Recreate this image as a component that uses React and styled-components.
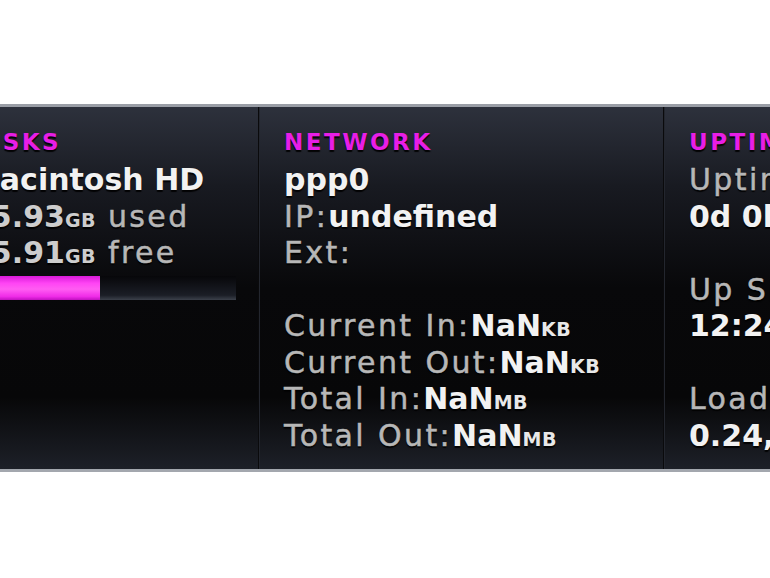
import React from 'react'
import styled, { createGlobalStyle } from 'styled-components'

const GlobalStyle = createGlobalStyle`
  html, body {
    margin: 0;
    padding: 0;
    background: #fff;
    overflow: hidden;
  }
  body {
    font-family: "DejaVu Sans", "Liberation Sans", sans-serif;
  }
`

const Page = styled.div`
  width: 770px;
  height: 578px;
  padding-top: 104px;
  box-sizing: border-box;
  overflow: hidden;
`

const Panel = styled.div`
  height: 368px;
  box-sizing: border-box;
  border-top: 3px solid #9a9ea6;
  border-bottom: 3px solid #a3a7ae;
  background: linear-gradient(
    #2d313c 0%,
    #181a21 22%,
    #08080a 50%,
    #070708 80%,
    #1d2028 100%
  );
  overflow: hidden;
`

const Row = styled.div`
  display: flex;
  height: 100%;
  margin-left: -55px;
`

const Column = styled.div`
  flex: none;
  width: ${p => p.$width}px;
  box-sizing: border-box;
  padding: 21px 0 0 25px;
  white-space: nowrap;

  & + & {
    border-left: 1px solid #0a0a0c;
    box-shadow: inset 1px 0 0 #23262e;
  }
`

const Heading = styled.div`
  font-weight: bold;
  font-size: 23px;
  letter-spacing: 2.5px;
  line-height: 28px;
  color: #e81ee6;
  text-shadow: 0 2px 1px rgba(0, 0, 0, 0.9);
  margin-bottom: 6px;
`

const Line = styled.div`
  font-size: 30px;
  line-height: 36.5px;
  height: 36.5px;
  color: #b7b7b7;
  letter-spacing: 2.4px;
  -webkit-text-stroke: 0.5px #b7b7b7;
  text-shadow: 0 2px 1px rgba(0, 0, 0, 0.9);
`

const Value = styled.span`
  font-weight: bold;
  letter-spacing: 0;
  -webkit-text-stroke: 0;
  color: ${p => (p.$dim ? '#cdcdcd' : '#f2f2f2')};
`

const Unit = styled.span`
  font-weight: bold;
  font-size: 19px;
  letter-spacing: 0.5px;
  -webkit-text-stroke: 0;
  color: ${p => (p.$dim ? '#cdcdcd' : '#e8e8e8')};
`

const Track = styled.div`
  margin-top: 4px;
  width: 266px;
  height: 24px;
  background: linear-gradient(#07070a, #1b1e26 80%, #3c414b);
`

const Fill = styled.div`
  height: 100%;
  background: linear-gradient(#d81ad8, #ff44f4 30%, #ff5cf2 55%, #f02ce8 85%, #c010c0);
`

const disk = { used: 49, name: 'Macintosh HD' }

export default function App() {
  return (
    <Page>
      <GlobalStyle />
      <Panel>
        <Row>
          <Column $width={313}>
            <Heading>DISKS</Heading>
            <Line><Value>{disk.name}</Value></Line>
            <Line><Value $dim>65.93</Value><Unit $dim>GB</Unit> used</Line>
            <Line><Value $dim>85.91</Value><Unit $dim>GB</Unit> free</Line>
            <Track>
              <Fill style={{ width: `${disk.used}%` }} />
            </Track>
          </Column>

          <Column $width={405}>
            <Heading>NETWORK</Heading>
            <Line><Value>ppp0</Value></Line>
            <Line>IP:<Value>undefined</Value></Line>
            <Line>Ext:</Line>
            <Line />
            <Line>Current In:<Value>NaN</Value><Unit>KB</Unit></Line>
            <Line>Current Out:<Value>NaN</Value><Unit>KB</Unit></Line>
            <Line>Total In:<Value>NaN</Value><Unit>MB</Unit></Line>
            <Line>Total Out:<Value>NaN</Value><Unit>MB</Unit></Line>
          </Column>

          <Column $width={300}>
            <Heading>UPTIME</Heading>
            <Line>Uptime:</Line>
            <Line><Value>0d 0h 12m</Value></Line>
            <Line />
            <Line>Up Since:</Line>
            <Line><Value>12:24</Value></Line>
            <Line />
            <Line>Load Avg:</Line>
            <Line><Value>0.24, 0.31, 0.28</Value></Line>
          </Column>
        </Row>
      </Panel>
    </Page>
  )
}
